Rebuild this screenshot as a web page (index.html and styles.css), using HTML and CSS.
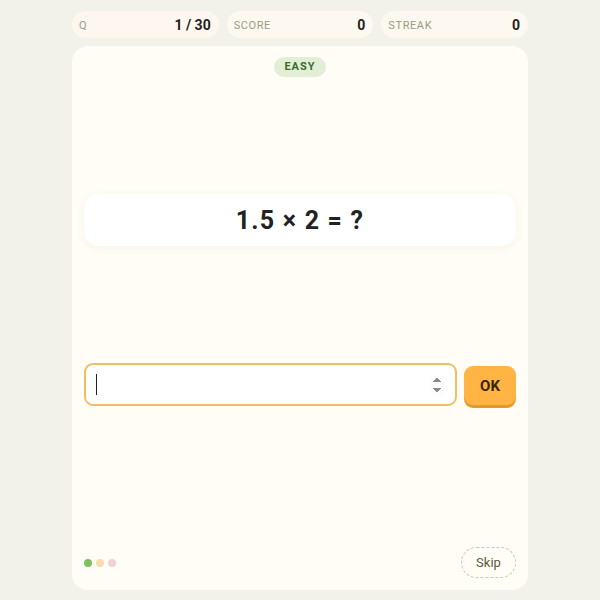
FILE: index.html
```html
<!DOCTYPE html>
<html>
<head>
<meta charset="utf-8">
<link rel="stylesheet" href="styles.css">
</head>
<body>
<div class="wrap">
  <div class="stats">
    <div class="stat stat-q"><span class="label">Q</span><span class="value">1 / 30</span></div>
    <div class="stat"><span class="label">SCORE</span><span class="value">0</span></div>
    <div class="stat"><span class="label">STREAK</span><span class="value">0</span></div>
  </div>
  <div class="card">
    <div class="badge-row"><span class="badge">EASY</span></div>
    <div class="question">1.5 × 2 = ?</div>
    <div class="answer-row">
      <div class="answer-wrap">
        <input class="answer" type="number" autofocus>
        <span class="caret"></span>
      </div>
      <button class="ok">OK</button>
    </div>
    <div class="footer">
      <div class="dots"><span class="dot green"></span><span class="dot peach"></span><span class="dot pink"></span></div>
      <button class="skip">Skip</button>
    </div>
  </div>
</div>
</body>
</html>
```
FILE: styles.css
```css
html, body { margin: 0; padding: 0; }
body {
  background: #f3f2ea;
  font-family: Roboto, "Liberation Sans", sans-serif;
  color: #222;
}
.wrap {
  width: 456px;
  margin: 11px auto 0;
}
.stats {
  display: flex;
  gap: 8px;
  height: 27px;
}
.stat {
  flex: 1;
  display: flex;
  align-items: center;
  justify-content: space-between;
  padding: 1px 8px 0 7px;
  background: #fdf9f0;
  border-radius: 14px;
}
.stat-q { background: #fdf7ef; }
.label {
  font-size: 11px;
  letter-spacing: 0.6px;
  color: #9e9a82;
}
.value {
  font-size: 14px;
  font-weight: 700;
  color: #222;
}
.card {
  margin-top: 8px;
  height: 544px;
  box-sizing: border-box;
  background: #fffdf6;
  border-radius: 16px;
  padding: 11px 12px 12px;
  display: flex;
  flex-direction: column;
}
.badge-row { display: flex; justify-content: center; }
.badge {
  background: #e2efd6;
  color: #3d6b2c;
  font-size: 11px;
  font-weight: 700;
  letter-spacing: 1px;
  padding: 0 10px;
  height: 20px;
  line-height: 20px;
  border-radius: 10px;
}
.question {
  margin-top: 117px;
  height: 52px;
  background: #fff;
  border-radius: 14px;
  box-shadow: 0 2px 8px rgba(120, 110, 70, 0.08);
  display: flex;
  align-items: center;
  justify-content: center;
  font-size: 25px;
  font-weight: 700;
  color: #222;
  letter-spacing: 1.2px;
}
.answer-row {
  margin-top: 117px;
  display: flex;
  gap: 7px;
  align-items: flex-start;
}
.answer-wrap {
  flex: 1;
  position: relative;
  display: flex;
}
.answer {
  flex: 1;
  width: 100%;
  height: 43px;
  box-sizing: border-box;
  border: 2px solid #efbf62;
  border-radius: 9px;
  background: #fff;
  padding: 0 10px;
  font-family: Roboto, "Liberation Sans", sans-serif;
  font-size: 17px;
  outline: none;
  margin: 0;
  caret-color: #222;
}
.caret {
  position: absolute;
  left: 12px;
  top: 11px;
  width: 1px;
  height: 21px;
  background: #222;
}
.ok {
  margin-top: 3px;
  width: 52px;
  height: 39px;
  border: none;
  border-radius: 9px;
  background: #ffb443;
  box-shadow: 0 3px 0 #e39b27;
  color: #3a2608;
  font-family: Roboto, "Liberation Sans", sans-serif;
  font-size: 15px;
  font-weight: 700;
  padding: 0;
}
.footer {
  margin-top: auto;
  display: flex;
  align-items: center;
  justify-content: space-between;
}
.dots { display: flex; gap: 4px; }
.dot { width: 8px; height: 8px; border-radius: 50%; }
.green { background: #7cc062; }
.peach { background: #f8dcae; }
.pink { background: #f4d0d0; }
.skip {
  width: 55px;
  height: 31px;
  border: 1px dashed #cfc7a6;
  border-radius: 16px;
  background: transparent;
  color: #5b5a40;
  font-family: Roboto, "Liberation Sans", sans-serif;
  font-size: 13px;
  padding: 0;
}
```
